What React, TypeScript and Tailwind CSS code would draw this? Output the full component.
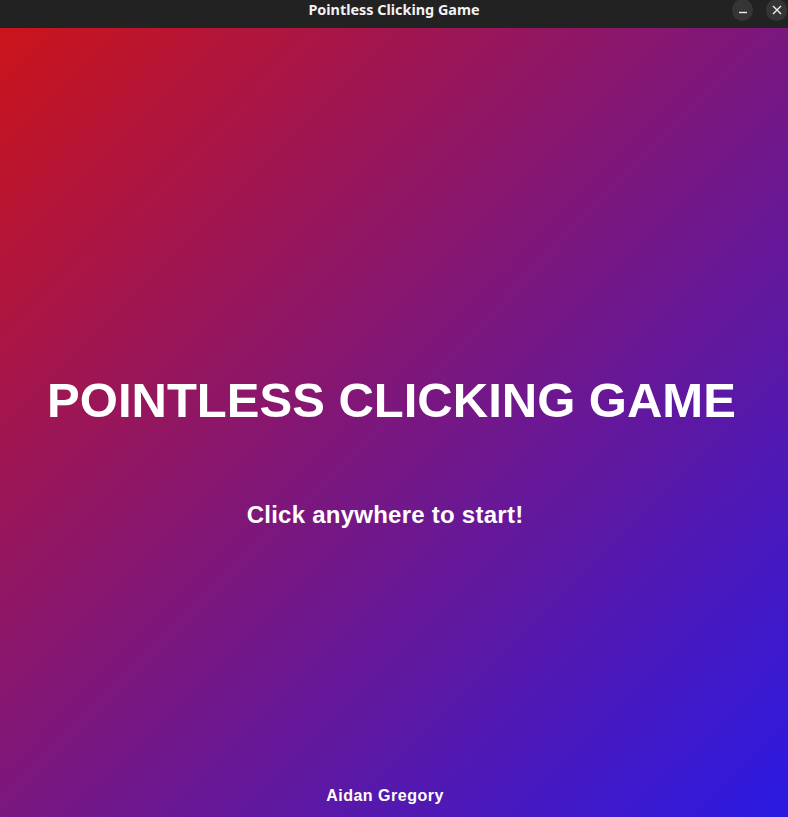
import React from 'react';

const TitleBar: React.FC = () => {
    return (
        <div className="relative h-[28px] w-full bg-[#222222] shrink-0">
            <div className="flex h-[21px] items-center justify-center">
                <span className="font-['Noto_Sans',sans-serif] text-[14.4px] font-bold leading-none text-[#f2f2f2]">
                    Pointless Clicking Game
                </span>
            </div>
            <div className="absolute right-[1px] top-[-1px] flex gap-[13px]">
                <button className="flex h-[22px] w-[21px] items-center justify-center rounded-full bg-[#353535]">
                    <svg width="10" height="10" viewBox="0 0 10 10" className="mt-[3px]">
                        <path d="M1 5.5h8" stroke="#eeeeee" strokeWidth="1.4" />
                    </svg>
                </button>
                <button className="flex h-[22px] w-[21px] items-center justify-center rounded-full bg-[#353535]">
                    <svg width="10" height="10" viewBox="0 0 10 10" className="mb-[1px]">
                        <path d="M1 1l8 8M9 1l-8 8" stroke="#eeeeee" strokeWidth="1.4" />
                    </svg>
                </button>
            </div>
        </div>
    );
};

export default function App() {
    return (
        <div className="flex h-[817px] w-full flex-col overflow-hidden">
            <TitleBar />
            <main className="flex flex-1 cursor-pointer flex-col items-center bg-[linear-gradient(to_bottom_right,#cb141b,#2a1ae3)] pt-[348px] pr-[18px] pb-[13px] text-white font-['Liberation_Sans',Arial,sans-serif] font-bold">
                <h1 className="ml-[13px] text-[49px] leading-[49px] font-bold whitespace-nowrap">
                    POINTLESS CLICKING GAME
                </h1>
                <p className="mt-[78px] text-[24px] leading-[24px] tracking-[0.25px] whitespace-nowrap">
                    Click anywhere to start!
                </p>
                <footer className="mt-auto text-[16px] leading-[16px] tracking-[0.5px]">
                    Aidan Gregory
                </footer>
            </main>
        </div>
    );
}
